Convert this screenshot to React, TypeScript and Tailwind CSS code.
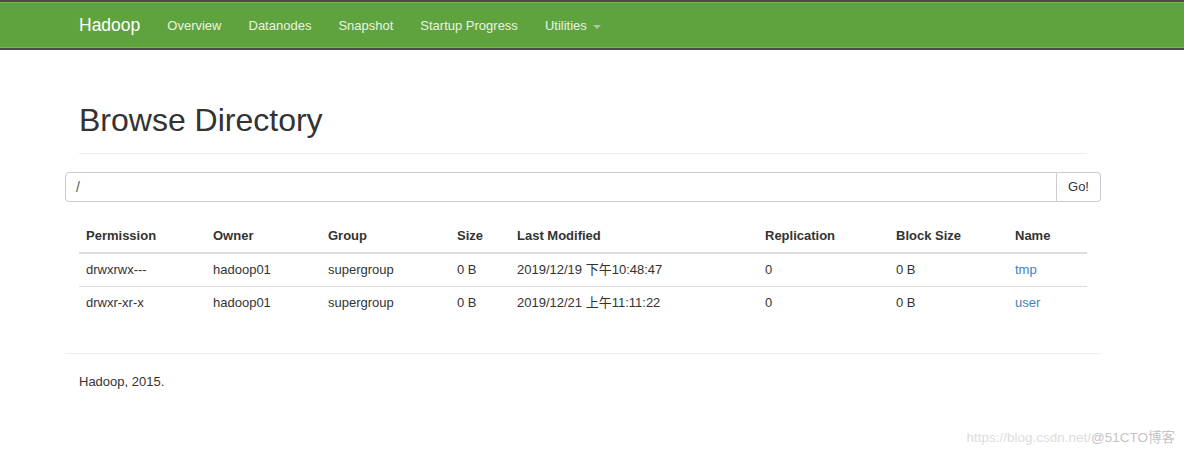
import React from 'react';

const font = { fontFamily: '"Liberation Sans", Arial, "Noto Sans CJK SC", sans-serif' };

const navLinks = ['Overview', 'Datanodes', 'Snapshot', 'Startup Progress'];

const rows = [
  { perm: 'drwxrwx---', owner: 'hadoop01', group: 'supergroup', size: '0 B', modified: '2019/12/19 下午10:48:47', repl: '0', block: '0 B', name: 'tmp' },
  { perm: 'drwxr-xr-x', owner: 'hadoop01', group: 'supergroup', size: '0 B', modified: '2019/12/21 上午11:11:22', repl: '0', block: '0 B', name: 'user' },
];

const cols = [127, 115, 129, 60, 248, 131, 119, 79];
const headers = ['Permission', 'Owner', 'Group', 'Size', 'Last Modified', 'Replication', 'Block Size', 'Name'];

function Navbar() {
  return (
    <div className="border-y-2 border-[#4b4b4b] bg-[#5fa33e]">
      <div className="flex h-[46px] items-center border-y border-[#6dbb46] pl-[79px] pt-[1px]">
        <span className="mr-[27px] text-[17.5px] text-white">Hadoop</span>
        <div className="flex items-center gap-[27px] text-[13px] text-[#e8f4e1]">
          {navLinks.map((l) => (
            <span key={l}>{l}</span>
          ))}
          <span className="flex items-center gap-[6px]">
            Utilities
            <span className="mt-[2px] h-0 w-0 border-x-[4px] border-t-[4px] border-x-transparent border-t-[#a9c99a]" />
          </span>
        </div>
      </div>
    </div>
  );
}

function FileTable() {
  return (
    <table className="mx-[14px] mt-[17px] w-[1008px] table-fixed border-collapse text-[13px] text-[#333]">
      <colgroup>
        {cols.map((w, i) => (
          <col key={i} style={{ width: w }} />
        ))}
      </colgroup>
      <thead>
        <tr className="h-[34px] border-b-2 border-[#dddddd]">
          {headers.map((h) => (
            <th key={h} className="px-[7px] text-left font-bold">{h}</th>
          ))}
        </tr>
      </thead>
      <tbody>
        {rows.map((r, i) => (
          <tr key={r.name} className={i === 0 ? 'h-[33px] border-b border-[#dddddd]' : 'h-[33px]'}>
            <td className="px-[7px]">{r.perm}</td>
            <td className="px-[7px]">{r.owner}</td>
            <td className="px-[7px]">{r.group}</td>
            <td className="px-[7px]">{r.size}</td>
            <td className="px-[7px]">{r.modified}</td>
            <td className="px-[7px]">{r.repl}</td>
            <td className="px-[7px]">{r.block}</td>
            <td className="px-[7px] text-[#3f7fbf]">{r.name}</td>
          </tr>
        ))}
      </tbody>
    </table>
  );
}

export default function App() {
  return (
    <div className="relative h-[455px] w-[1184px] overflow-hidden bg-white" style={font}>
      <Navbar />
      <div className="ml-[65px] w-[1036px]">
        <div className="mx-[14px] mt-[53px] border-b border-[#eeeeee] pb-[15px]">
          <h1 className="text-[32px] leading-[35px] text-[#333]">Browse Directory</h1>
        </div>
        <div className="mt-[18px] flex h-[30px]">
          <div className="flex flex-1 items-center rounded-l-[4px] border border-[#cccccc] pl-[10px] text-[14px] text-[#555]">/</div>
          <div className="flex w-[44px] items-center justify-center rounded-r-[4px] border border-l-0 border-[#cccccc] text-[13px] text-[#333]">Go!</div>
        </div>
        <FileTable />
        <div className="mt-[34px] border-t border-[#eeeeee] px-[14px] pt-[18px] text-[13px] text-[#333]">Hadoop, 2015.</div>
      </div>
      <div className="absolute bottom-[7px] right-[9px] text-[13.5px] text-[#dcdcdc]">
        https://blog.csdn.net/<span className="text-[#c4c4c4]">@51CTO博客</span>
      </div>
    </div>
  );
}
